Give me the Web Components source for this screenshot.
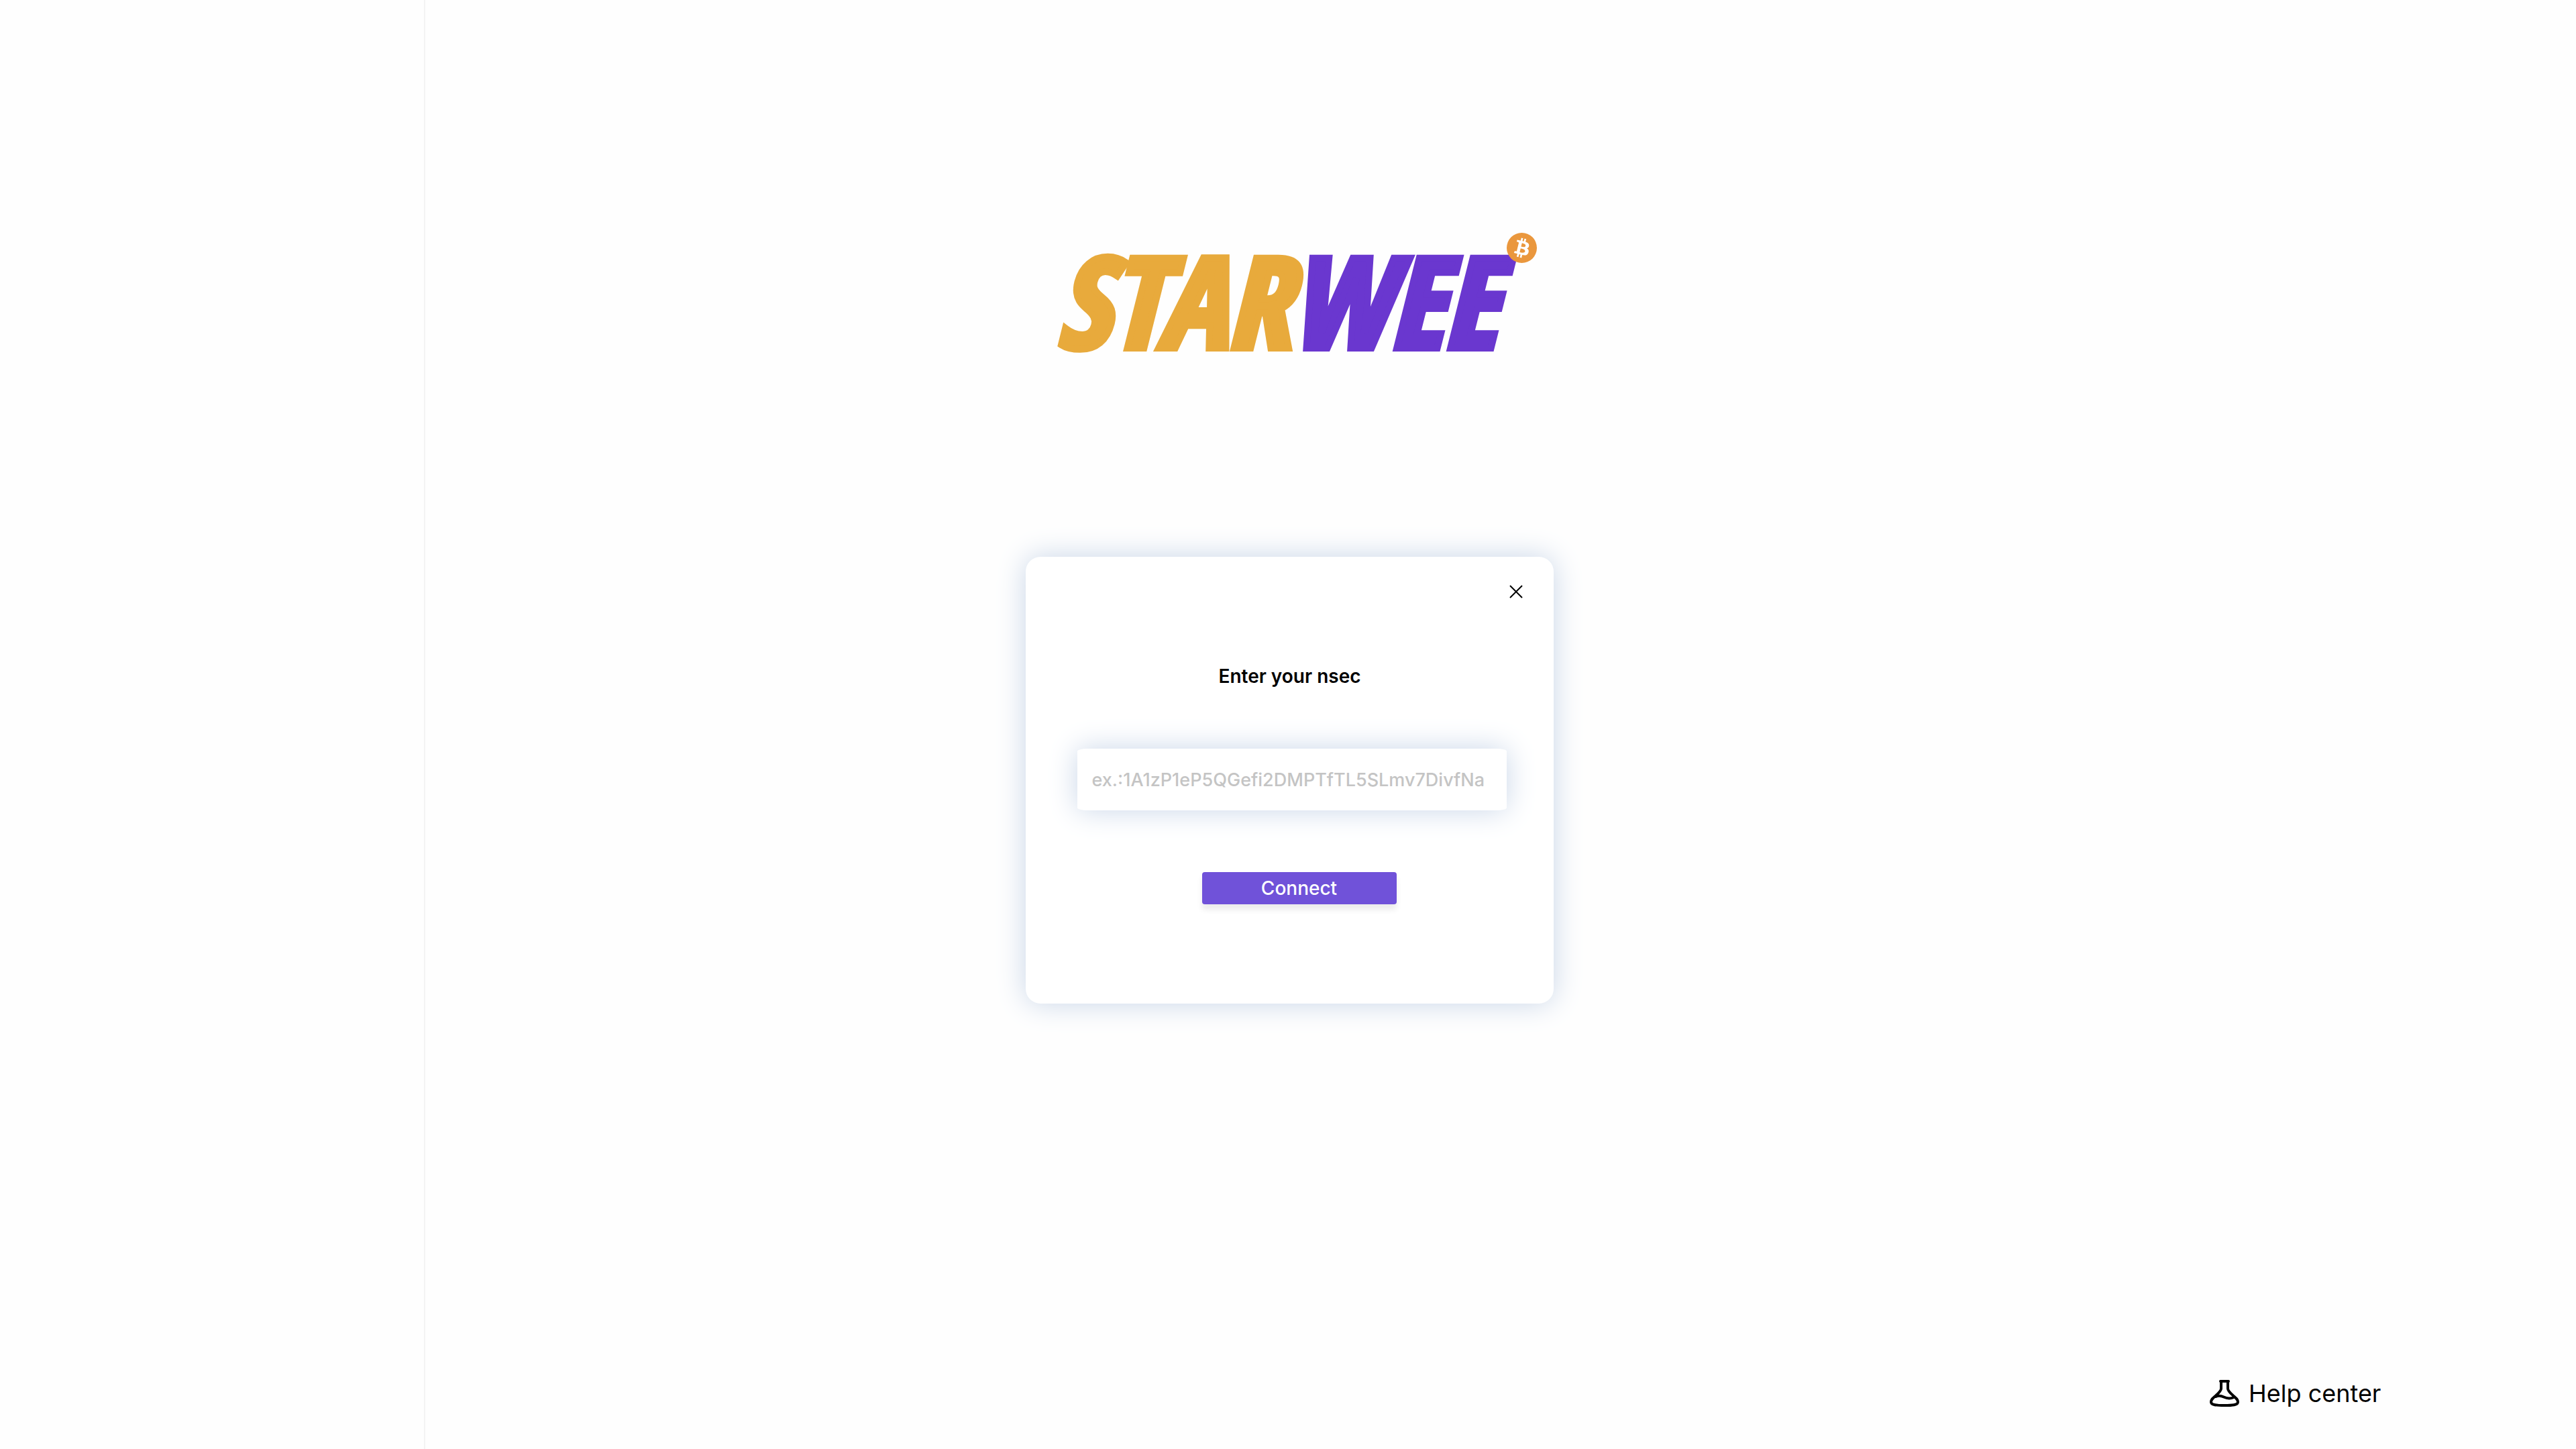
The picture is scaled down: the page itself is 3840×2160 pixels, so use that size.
<!DOCTYPE html>
<html lang="en">
<head>
<meta charset="utf-8">
<title>Starwee</title>
<style>
body { margin: 0; background: #fefefe; color: #000; font-family: Inter, "Liberation Sans", sans-serif; }
</style>
</head>
<body>
<app-shell>
  <brand-logo slot="brand"></brand-logo>
  <nsec-card heading="Enter your nsec" placeholder="ex.:1A1zP1eP5QGefi2DMPTfTL5SLmv7DivfNa" action="Connect"></nsec-card>
  <help-link slot="help">Help center</help-link>
</app-shell>
<script>
class BaseElement extends HTMLElement {
  connectedCallback() {
    if (!this.shadowRoot) this.attachShadow({ mode: "open" }).innerHTML = this.render();
  }
}

customElements.define("app-shell", class extends BaseElement {
  render() {
    return `
      <style>
        :host { display: grid; grid-template-columns: 634px 1fr 629px; min-height: 100vh; }
        nav { border-right: 2px solid #f3f3f3; }
        main { display: flex; flex-direction: column; align-items: center; gap: 308px; padding: 347px 0 64px; }
        aside { display: flex; align-items: flex-end; padding: 0 0 59px 83px; }
      </style>
      <nav aria-label="Main"></nav>
      <main><slot name="brand"></slot><slot></slot></main>
      <aside><slot name="help"></slot></aside>`;
  }
});

customElements.define("brand-logo", class extends BaseElement {
  render() {
    return `
      <style>
        :host { display: block; position: relative; padding-left: 20px; }
        h1 { margin: 0; width: 716px; height: 175px; display: flex; align-items: flex-end;
             font: italic 900 188px/152px "Noto Sans ExtraCondensed", "Open Sans Condensed", "Roboto Condensed", "Liberation Sans Narrow", "Liberation Sans", sans-serif; white-space: nowrap; }
        .star { color: #e8aa3c; -webkit-text-stroke: 10px #e8aa3c; }
        .wee { color: #6a37cf; -webkit-text-stroke: 10px #6a37cf; }
        svg { position: absolute; top: 0; right: 0; width: 45px; height: 45px; }
      </style>
      <h1><span class="star">STAR</span><span class="wee">WEE</span></h1>
      <svg viewBox="1 1 30 30" aria-hidden="true">
        <circle cx="16" cy="16" r="15" fill="#ea973d"/>
        <path fill="#fff" d="M23.189 14.02c.314-2.096-1.283-3.223-3.465-3.975l.708-2.84-1.728-.43-.69 2.765c-.454-.114-.92-.22-1.385-.326l.695-2.783L15.596 6l-.708 2.839c-.376-.086-.746-.17-1.104-.26l.002-.009-2.384-.595-.46 1.846s1.283.294 1.256.312c.7.175.826.638.805 1.006l-.806 3.235c.048.012.11.03.18.057l-.183-.045-1.13 4.532c-.086.212-.303.531-.793.41.018.025-1.256-.313-1.256-.313l-.858 1.978 2.25.561c.418.105.828.215 1.231.318l-.715 2.872 1.727.43.708-2.84c.472.127.93.245 1.378.357l-.706 2.828 1.728.43.715-2.866c2.948.558 5.164.333 6.097-2.333.752-2.146-.037-3.385-1.588-4.192 1.13-.26 1.98-1.003 2.207-2.538zm-3.95 5.538c-.533 2.147-4.148.986-5.32.695l.95-3.805c1.172.293 4.929.872 4.37 3.11zm.535-5.569c-.487 1.953-3.495.96-4.47.717l.86-3.45c.975.243 4.118.696 3.61 2.733z"/>
      </svg>`;
  }
});

customElements.define("nsec-card", class extends BaseElement {
  render() {
    return `
      <style>
        :host { display: block; }
        form { box-sizing: border-box; width: 787px; height: 666px; padding: 32px 36px; border-radius: 22px;
               background: #fff; box-shadow: 0 0 44px #c9d6e8; display: flex; flex-direction: column; align-items: center; }
        button, input { font: inherit; border: 0; margin: 0; }
        .close { align-self: flex-end; width: 40px; height: 40px; padding: 10px; background: none; color: inherit; }
        .close svg { display: block; width: 20px; height: 20px; }
        label { margin-top: 88px; font-size: 28px; font-weight: 600; line-height: 36px; }
        input { box-sizing: border-box; width: 640px; height: 92px; margin: 90px 0 0 6px; padding: 0 22px; border-radius: 15px / 4px;
                background: #fff; box-shadow: 0 0 44px #c9d6e8; font-size: 27px; font-weight: 500; }
        input::placeholder { color: #c4c4c4; opacity: 1; }
        .go { width: 290px; height: 48px; margin: 92px 0 0 28px; padding: 0; border-radius: 4px; background: #7052d9; color: #fff;
              box-shadow: 0 8px 8px rgba(0, 0, 0, .08); font-size: 28px; font-weight: 500; line-height: 48px; }
      </style>
      <form>
        <button class="close" type="button" aria-label="Close">
          <svg viewBox="0 0 20 20" fill="none" stroke="currentColor" stroke-width="2"><path d="M1 1l18 18M19 1l-18 18"/></svg>
        </button>
        <label for="nsec">${this.getAttribute("heading")}</label>
        <input id="nsec" type="text" placeholder="${this.getAttribute("placeholder")}">
        <button class="go" type="button">${this.getAttribute("action")}</button>
      </form>`;
  }
});

customElements.define("help-link", class extends BaseElement {
  render() {
    return `
      <style>
        :host { display: block; }
        a { display: flex; align-items: center; gap: 14px; color: inherit; text-decoration: none; font-size: 36px; line-height: 48px; white-space: nowrap; }
        svg { width: 44px; height: 40px; }
      </style>
      <a href="#help">
        <svg viewBox="0 0 44 40" fill="none" stroke="currentColor" stroke-width="4" stroke-linecap="round" stroke-linejoin="round" aria-hidden="true">
          <path d="M16 2H28M17 3V13C17 16 14 19 9.500 23C5 27 2 29 2 33C2 37.500 10 38 22 38S42 37.500 42 33C42 29 39 27 34.500 23C30 19 27 16 27 13V3"/>
          <path d="M9 25C13 23 17 23.500 21 25.500C26 28 31 28 36 26"/>
        </svg>
        <slot></slot>
      </a>`;
  }
});
</script>
</body>
</html>
